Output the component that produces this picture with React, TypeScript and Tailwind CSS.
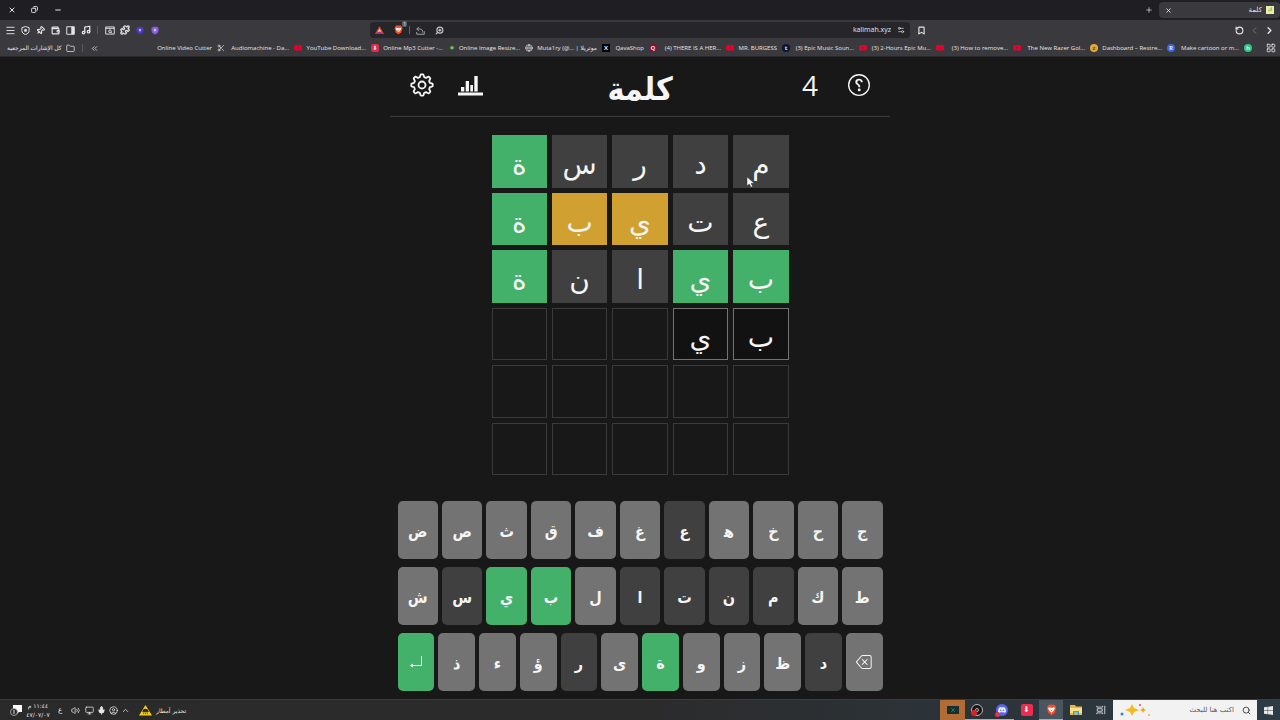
import type { ReactNode } from "react";
import {
  ChevronLeft, ChevronRight, ChevronUp, ChevronsLeft, Copy, Folder, LayoutGrid, Menu, Minus, Music,
  PanelRight, Pin, Plus, Puzzle, RotateCcw, Wallet, X, Bookmark, ZoomIn, Settings2,
  Search, Volume2, Monitor, Mic, Globe, Scissors, CircleUser,
} from "lucide-react";
import { BsQuestionCircle, BsBackspace, BsWindows, BsDiscord, BsYoutube } from "react-icons/bs";

type Tone = "green" | "gold" | "dark" | "gray" | "typed" | "empty";

const tones: Record<Tone, string> = {
  green: "bg-[#44b16b]",
  gold: "bg-[#d0a131]",
  dark: "bg-[#404040]",
  gray: "bg-[#737373]",
  typed: "border border-[#737373] bg-[#121212]",
  empty: "border border-[#3a3a3a]",
};

const board: [string, Tone][][] = [
  [["م", "dark"], ["د", "dark"], ["ر", "dark"], ["س", "dark"], ["ة", "green"]],
  [["ع", "dark"], ["ت", "dark"], ["ي", "gold"], ["ب", "gold"], ["ة", "green"]],
  [["ب", "green"], ["ي", "green"], ["ا", "dark"], ["ن", "dark"], ["ة", "green"]],
  [["ب", "typed"], ["ي", "typed"], ["", "empty"], ["", "empty"], ["", "empty"]],
  [["", "empty"], ["", "empty"], ["", "empty"], ["", "empty"], ["", "empty"]],
  [["", "empty"], ["", "empty"], ["", "empty"], ["", "empty"], ["", "empty"]],
];

const topKeys = ["ج", "ح", "خ", "ه\u200d", "ع", "غ", "ف", "ق", "ث", "ص", "ض"];
const middleKeys = ["ط", "ك", "م", "ن", "ت", "ا", "ل", "ب", "ي", "س", "ش"];
const bottomKeys = ["د", "ظ", "ز", "و", "ة", "ى", "ر", "ؤ", "ء", "ذ"];
const correct = ["ب", "ي", "ة"];
const absent = ["ع", "م", "ن", "ت", "ا", "س", "د", "ر"];

function Key({ letter }: { letter: string }) {
  const tone: Tone = correct.includes(letter) ? "green" : absent.includes(letter) ? "dark" : "gray";
  return (
    <button className={`h-[58px] flex-1 rounded-[5px] pt-1 text-base font-bold ${tones[tone]}`}>{letter}</button>
  );
}

function KeyRow({ children }: { children: ReactNode }) {
  return <div className="flex gap-1">{children}</div>;
}

function YouTubeMark() {
  return <BsYoutube className="size-2 shrink-0 text-[#e8002d]" />;
}

function Badge({ className, children }: { className: string; children: ReactNode }) {
  return (
    <span className={`flex size-2 shrink-0 items-center justify-center text-[6px] leading-none font-bold ${className}`}>
      {children}
    </span>
  );
}

const bookmarks: { title: string; width: string; icon: ReactNode }[] = [
  { title: "Make cartoon or m...", width: "w-[77px]", icon: <Badge className="rounded-full bg-[#2fc87a]">h</Badge> },
  { title: "Dashboard – Restre...", width: "w-[77px]", icon: <Badge className="rounded-full bg-[#3569e0]">R</Badge> },
  { title: "The New Razer Gol...", width: "w-[77px]", icon: <Badge className="rounded-full bg-[#e0a93a] text-[#6d4708]">z</Badge> },
  { title: "(3) How to remove...", width: "w-[77px]", icon: <YouTubeMark /> },
  { title: "(3) 2-Hours Epic Mu...", width: "w-[77px]", icon: <YouTubeMark /> },
  { title: "(3) Epic Music Soun...", width: "w-[77px]", icon: <YouTubeMark /> },
  { title: "MR. BURGESS", width: "w-[56px]", icon: <Badge className="rounded-full bg-[#06173a]">t</Badge> },
  { title: "(4) THERE IS A HER...", width: "w-[77px]", icon: <YouTubeMark /> },
  { title: "QavaShop", width: "w-[47px]", icon: <Badge className="rounded-full bg-[#8c0d35]">Q</Badge> },
  { title: "Muta1ry (@... | موتريلا", width: "w-[77px]", icon: <Badge className="bg-black">X</Badge> },
  { title: "Online Image Resize...", width: "w-[77px]", icon: <Globe className="size-2 shrink-0" /> },
  { title: "Online Mp3 Cutter -...", width: "w-[77px]", icon: <Badge className="rounded-full text-[#58c94a]">✹</Badge> },
  { title: "YouTube Download...", width: "w-[77px]", icon: <Badge className="rounded-xs bg-[#e5294b]">⬇</Badge> },
  { title: "Audiomachine - Da...", width: "w-[77px]", icon: <YouTubeMark /> },
  { title: "Online Video Cutter", width: "w-[77px]", icon: <Scissors className="size-2 shrink-0" /> },
];

function BarIcon({ label, children }: { label: string; children: ReactNode }) {
  return (
    <button aria-label={label} className="flex w-[15px] items-center justify-center">
      {children}
    </button>
  );
}

function BraveLion({ className }: { className: string }) {
  return (
    <svg viewBox="0 0 16 18" className={className} aria-hidden="true">
      <path d="M4 1h8l2 2 1 3-2 7-5 4-5-4-2-7 1-3z" fill="#f4502a" />
      <path d="M4 5l4 1 4-1 1 2-2 3-3 3-3-3-2-3z" fill="#fff" />
      <path d="M6 8l2 1 2-1-2 3z" fill="#f4502a" />
    </svg>
  );
}

function PurpleShield({ className }: { className: string }) {
  return (
    <svg viewBox="0 0 16 18" className={className} aria-hidden="true">
      <path d="M8 1l7 2v6c0 4-3 6-7 8-4-2-7-4-7-8V3z" fill="currentColor" />
      <path d="M8 5l1 2 2 1-2 1-1 3-1-3-2-1 2-1z" fill="#fff" />
    </svg>
  );
}

function Browser() {
  return (
    <header className="font-['Open_Sans','DejaVu_Sans',sans-serif] text-[#e6e6e8]">
      <div className="flex h-5 items-center justify-between bg-[#1f1e23]">
        <div className="flex items-center gap-1.5">
          <div className="flex h-4 w-[121px] items-center justify-between rounded-[4px] bg-[#3a393e] px-1.5 text-[7px]">
            <span className="flex items-center gap-1">
              <span className="flex size-2 items-center justify-center bg-[#e8edaa] text-[5px] text-[#5a6020]">ك</span>
              كلمة
            </span>
            <button aria-label="إغلاق علامة التبويب"><X className="size-[7px]" strokeWidth={3} /></button>
          </div>
          <button aria-label="علامة تبويب جديدة"><Plus className="size-2" /></button>
        </div>
        <div dir="ltr" className="flex">
          <button aria-label="إغلاق" className="flex w-[23px] justify-center"><X className="size-2" strokeWidth={3} /></button>
          <button aria-label="استعادة" className="flex w-[23px] justify-center"><Copy className="size-[7px] -scale-x-100" strokeWidth={3} /></button>
          <button aria-label="تصغير" className="flex w-[23px] justify-center"><Minus className="size-2" strokeWidth={3} /></button>
        </div>
      </div>

      <div className="flex h-5 items-center bg-[#3a393e] px-[3px]">
        <div className="flex flex-1 items-center">
          <BarIcon label="التالي"><ChevronRight className="size-[11px]" strokeWidth={3} /></BarIcon>
          <BarIcon label="السابق"><ChevronLeft className="size-[11px] text-[#77767b]" /></BarIcon>
          <BarIcon label="تحديث"><RotateCcw className="size-[9px]" strokeWidth={3} /></BarIcon>
          <div className="mr-auto ml-1 flex">
            <BarIcon label="إضافة إشارة"><Bookmark className="size-[9px]" strokeWidth={3} /></BarIcon>
          </div>
        </div>
        <div dir="ltr" className="flex h-4 w-[540px] items-center gap-1.5 rounded-[4px] bg-[#26252a] px-[5px]">
          <svg viewBox="0 0 16 14" className="mr-1 h-2 w-[9px]" aria-hidden="true">
            <path d="M8 0L0 14h16z" fill="#e8452c" />
            <path d="M0 14h16l-8-4z" fill="#7a3ab8" />
            <path d="M8 5l3 5-3-1-3 1z" fill="#fff" />
          </svg>
          <span className="relative">
            <BraveLion className="h-[10px] w-[9px]" />
            <span className="absolute -top-1 -right-1 rounded-xs bg-[#5c6470] px-px text-[5px] leading-[6px]">1</span>
          </span>
          <span className="h-2 w-px bg-[#66656a]" />
          <svg viewBox="0 0 12 12" className="size-[9px] text-[#a5a4a9]" fill="none" stroke="currentColor" strokeWidth="1.300" aria-hidden="true">
            <path d="M4 1L1 4l3 3M1 4h4c3 0 4 2 4 5M1 8v3h10V7" />
          </svg>
          <ZoomIn className="ml-1 size-[9px] -scale-x-100 text-[#c5c4c9]" strokeWidth={3} />
          <input
            aria-label="العنوان"
            readOnly
            defaultValue="kalimah.xyz"
            className="min-w-0 flex-1 bg-transparent text-right text-[7px] outline-none"
          />
          <Settings2 className="size-2" />
        </div>
        <div dir="ltr" className="flex flex-1 items-center">
          <BarIcon label="القائمة"><Menu className="size-[11px]" /></BarIcon>
          <BarIcon label="الحماية">
            <svg viewBox="0 0 12 12" className="size-[9px]" fill="none" stroke="currentColor" strokeWidth="1.300" aria-hidden="true">
              <path d="M6 0.700l4.800 1.500v4c0 2.600-2 4.200-4.800 5.200-2.800-1-4.800-2.600-4.800-5.200v-4z" />
              <path d="M6 3.500l2 1.500-0.700 2.500H4.700L4 5z" fill="currentColor" stroke="none" />
            </svg>
          </BarIcon>
          <BarIcon label="المساعد"><Pin className="size-[9px] rotate-45" strokeWidth={3} /></BarIcon>
          <BarIcon label="المحفظة"><Wallet className="size-[9px]" strokeWidth={3} /></BarIcon>
          <BarIcon label="الشريط الجانبي">
            <svg viewBox="0 0 12 12" className="size-[9px]" aria-hidden="true">
              <path d="M1 1h10v10H1z" fill="none" stroke="currentColor" strokeWidth="1.300" />
              <path d="M7 1h4v10H7z" fill="currentColor" />
            </svg>
          </BarIcon>
          <BarIcon label="الموسيقى"><Music className="size-[10px]" strokeWidth={3} /></BarIcon>
          <span className="mx-1 h-2 w-px bg-[#5a595e]" />
          <BarIcon label="بحث بالصورة">
            <svg viewBox="0 0 14 12" className="h-[9px] w-[10px]" fill="none" stroke="currentColor" strokeWidth="1.300" aria-hidden="true">
              <path d="M1 1h12v10H1zM1 3h12M8.500 8.500L10 10" />
              <circle cx="7" cy="7" r="1.800" />
            </svg>
          </BarIcon>
          <BarIcon label="الإضافات"><Puzzle className="size-[10px]" strokeWidth={3} /></BarIcon>
          <BarIcon label="إضافة أولى"><PurpleShield className="h-[9px] w-2 text-[#4c38c8]" /></BarIcon>
          <BarIcon label="إضافة ثانية"><PurpleShield className="h-[9px] w-2 text-[#8b5be0]" /></BarIcon>
        </div>
      </div>

      <nav className="flex h-[17px] items-center border-b border-[#2a2a2c] bg-[#3a393e] pr-1 pl-[7px] text-[6px] leading-[10px] font-medium whitespace-nowrap">
        <button aria-label="التطبيقات"><LayoutGrid className="size-[10px]" /></button>
        <div className="mr-[14px] flex min-w-0 flex-1">
          {bookmarks.map((b) => (
            <a key={b.title} href="#" className={`flex shrink-0 items-center gap-[5px] ${b.width}`}>
              {b.icon}
              <span dir="ltr">{b.title}</span>
            </a>
          ))}
        </div>
        <button aria-label="المزيد"><ChevronsLeft className="size-[9px]" /></button>
        <span className="mx-[7px] h-2 w-px bg-[#5a595e]" />
        <a href="#" className="flex items-center gap-1 text-[6px]">
          <Folder className="size-[9px]" />
          كل الإشارات المرجعية
        </a>
      </nav>
    </header>
  );
}

function ChartIcon() {
  return (
    <svg viewBox="0 0 25 22" className="h-[22px] w-[25px]" aria-hidden="true">
      <path fill="currentColor" d="M0 18.500h25v3H0zM3 13h3.300v4.500H3zM7.700 7H11v10.500H7.700zM12.300 11H15v6.500h-2.700zM16.300 2h3.400v15.500h-3.400z" />
    </svg>
  );
}

// Outline of an eight-toothed wheel with softly rounded teeth, centred on (12, 12).
const gearPoints = Array.from({ length: 120 }, (_, i) => {
  const angle = (i / 120) * Math.PI * 2;
  const wave = Math.max(-1.2, Math.min(1.4, 2.1 * Math.cos(8 * angle)));
  const radius = 9.3 + wave;
  return `${(12 + radius * Math.sin(angle)).toFixed(2)},${(12 - radius * Math.cos(angle)).toFixed(2)}`;
}).join(" ");

function GearIcon() {
  return (
    <svg viewBox="0 0 24 24" className="size-6" fill="none" stroke="currentColor" strokeWidth="1.800" strokeLinejoin="round" aria-hidden="true">
      <polygon points={gearPoints} />
      <circle cx="12" cy="12" r="3.500" />
    </svg>
  );
}

function Game() {
  return (
    <main className="relative flex flex-1 flex-col items-center bg-[#181818] pb-2 font-['DejaVu_Sans',sans-serif] text-[#f5f5f5]">
      <div className="flex h-[60px] w-full max-w-[500px] items-center border-b border-[#3a3a3a] px-5 pb-1">
        <div className="flex flex-1 items-center gap-[30px]">
          <button aria-label="مساعدة"><BsQuestionCircle className="size-[22px] -scale-x-100" /></button>
          <span className="font-['Open_Sans',sans-serif] text-[28px] leading-8">4</span>
        </div>
        <h1 className="pt-2 font-['DejaVu_Sans_Condensed','DejaVu_Sans',sans-serif] text-[32px] leading-10 font-bold">كلمة</h1>
        <div className="flex flex-1 items-center justify-end gap-6">
          <button aria-label="الإحصائيات"><ChartIcon /></button>
          <button aria-label="الإعدادات"><GearIcon /></button>
        </div>
      </div>

      <div className="mt-[18px] grid h-[340px] w-[297px] grid-cols-5 grid-rows-6 gap-[5px]">
        {board.flat().map(([letter, tone], i) => (
          <div key={i} className={`flex items-center justify-center pt-2 text-[28px] leading-8 ${tones[tone]}`}>
            {letter}
          </div>
        ))}
      </div>

      <div className="mt-[26px] flex w-full max-w-[485px] flex-col gap-2 font-['DejaVu_Sans_Condensed','DejaVu_Sans',sans-serif]">
        <KeyRow>{topKeys.map((k) => <Key key={k} letter={k} />)}</KeyRow>
        <KeyRow>{middleKeys.map((k) => <Key key={k} letter={k} />)}</KeyRow>
        <KeyRow>
          <button aria-label="حذف" className="flex h-[58px] flex-1 items-center justify-center rounded-[5px] bg-[#737373]">
            <BsBackspace className="size-4" />
          </button>
          {bottomKeys.map((k) => <Key key={k} letter={k} />)}
          <button aria-label="إدخال" className="flex h-[58px] flex-1 items-center justify-center rounded-[5px] bg-[#44b16b]">
            <svg viewBox="0 0 12 12" className="size-3" aria-hidden="true">
              <path d="M11.500 0v9.500H2" fill="none" stroke="currentColor" />
              <path d="M0 9.500l3-2v4z" fill="currentColor" />
            </svg>
          </button>
        </KeyRow>
      </div>

      <svg viewBox="0 0 10 14" className="absolute top-[120px] left-[747px] h-[11px] w-2" aria-hidden="true">
        <path d="M0 0v11l3-2 2 4 2-1-2-4h4z" fill="#fff" stroke="#222" strokeWidth="0.500" />
      </svg>
    </main>
  );
}

function Taskbar() {
  return (
    <footer className="flex h-[21px] items-stretch justify-between border-t border-[#3c3c3e] bg-linear-to-r from-[#2b2a2a] via-[#2b2b2c] to-[#2c3b45] font-['DejaVu_Sans',sans-serif] text-[7px] text-[#e8e8e8]">
      <div className="flex">
        <button aria-label="ابدأ" className="flex w-[23px] items-center justify-center"><BsWindows className="size-[9px]" /></button>
        <label className="flex w-36 items-center gap-2 bg-[#f2f2f2] px-1.5 text-[#444]">
          <Search className="size-[9px]" strokeWidth={2.5} />
          <input aria-label="بحث" placeholder="اكتب هنا للبحث" className="min-w-0 flex-1 bg-transparent outline-none placeholder:text-[#555]" />
          <svg viewBox="0 0 32 14" className="h-[14px] w-8" aria-hidden="true">
            <path d="M13 1l2 4 5 2-5 2-2 4-2-4-5-2 5-2z" fill="#f6b91e" />
            <path d="M24 4l1 2 2 1-2 1-1 2-1-2-2-1 2-1z" fill="#f0a51e" />
            <circle cx="3" cy="11" r="1.500" fill="#2d86d2" />
            <circle cx="21" cy="2" r="1" fill="#d9542b" />
            <circle cx="30" cy="12" r="1" fill="#e9b94a" />
          </svg>
        </label>
        <button aria-label="عرض المهام" className="flex w-[25px] items-center justify-center">
          <svg viewBox="0 0 12 12" className="size-[10px]" fill="none" stroke="currentColor" aria-hidden="true">
            <path d="M1 1v1.500h7V1M1.500 4.500h6v3h-6zM1 11V9.500h7V11M10.500 1v10" />
          </svg>
        </button>
        <button aria-label="الملفات" className="flex w-[25px] items-center justify-center">
          <svg viewBox="0 0 12 10" className="h-[10px] w-3" aria-hidden="true">
            <path d="M0 0h5l1 1.500h6V10H0z" fill="#e9b83a" />
            <path d="M0 3h12v5H0z" fill="#fbe08a" />
            <path d="M3 6h6v4H7.500V7.500h-3V10H3z" fill="#3e9bdc" />
          </svg>
        </button>
        <button aria-label="Brave" className="flex w-[24px] items-center justify-center border-b border-[#76b9ed] bg-[#4a565f]"><BraveLion className="h-3 w-[11px]" /></button>
        <button aria-label="التنزيل" className="flex w-[25px] items-center justify-center">
          <span className="flex size-3 items-center justify-center rounded-xs bg-[#ea2c4f] text-[8px]">⬇</span>
        </button>
        <button aria-label="Discord" className="flex w-[25px] items-center justify-center border-b border-[#76b9ed]">
          <span className="relative flex size-3 items-center justify-center rounded-full bg-[#5865f2]">
            <BsDiscord className="size-2" />
            <span className="absolute -bottom-px -left-px size-[5px] rounded-full bg-[#e2344a]" />
          </span>
        </button>
        <button aria-label="OBS" className="flex w-[24px] items-center justify-center border-b border-[#76b9ed]">
          <span className="relative flex size-3 items-center justify-center rounded-full border border-[#b5b5b5] bg-[#16161a]">
            <span className="size-1 rounded-full border border-[#b5b5b5]" />
            <span className="absolute -bottom-px -left-px size-[6px] rounded-full bg-[#e01f1f]" />
          </span>
        </button>
        <button aria-label="التطبيق النشط" className="flex w-[25px] items-center justify-center bg-[#b06c34]">
          <span className="flex h-2 w-3 items-center justify-center bg-[#16302f]"><X className="size-[6px] text-[#4fae9d]" /></span>
        </button>
      </div>

      <div dir="ltr" className="flex items-center pl-2">
        <button aria-label="الإشعارات" className="flex w-4 items-center justify-center">
          <svg viewBox="0 0 12 12" className="size-3" aria-hidden="true">
            <path d="M3 1h9v7H9l-2 2V8H3z" fill="#fff" />
            <circle cx="4" cy="8" r="3.500" fill="#2b2a2a" stroke="#bbb" strokeWidth="0.800" />
            <path d="M4 6v4" stroke="#ddd" />
          </svg>
        </button>
        <div className="flex w-7 flex-col items-center text-[6px] leading-[9px]">
          <span dir="rtl">١١:٤٤ م</span>
          <span>٤٧/٠٧/٠٧</span>
        </div>
        <span className="w-4 text-center">ع</span>
        <BarIcon label="الصوت"><Volume2 className="size-[9px]" /></BarIcon>
        <button aria-label="الشبكة" className="flex w-3 justify-center"><Monitor className="size-[9px]" /></button>
        <button aria-label="الميكروفون" className="flex w-3 justify-center"><Mic className="size-[9px]" fill="currentColor" /></button>
        <button aria-label="الحساب" className="flex w-3 justify-center"><CircleUser className="size-[9px]" /></button>
        <button aria-label="إظهار المزيد" className="flex w-3 justify-center"><ChevronUp className="size-[9px]" /></button>
        <button className="ml-2 flex items-center gap-1 text-[6px]">
          <svg viewBox="0 0 14 12" className="h-3 w-[13px]" aria-hidden="true">
            <path d="M7 0.500L14 12H0z" fill="#f5d211" />
            <path d="M4 8a3 3 0 0 1 6 0zM5 9v1.500M7 9v1.500M9 9v1.500" fill="#222" stroke="#222" strokeWidth="0.700" />
          </svg>
          <span>تحذير أمطار</span>
        </button>
      </div>
    </footer>
  );
}

export default function App() {
  return (
    <div dir="rtl" className="flex min-h-screen flex-col bg-[#181818]">
      <Browser />
      <Game />
      <Taskbar />
    </div>
  );
}
